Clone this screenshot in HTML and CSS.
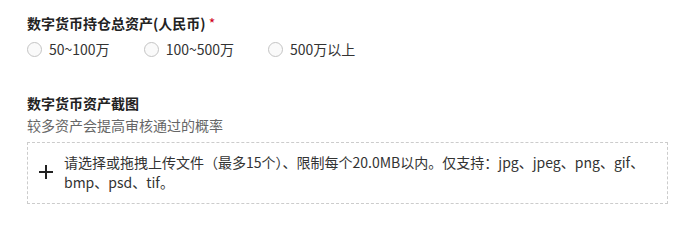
FILE: index.html
```html
<!DOCTYPE html>
<html lang="zh-CN">

<head>
  <meta charset="UTF-8">
  <meta name="viewport" content="width=device-width, initial-scale=1.0">
  <title>资产信息</title>
  <link rel="stylesheet" href="styles.css">
</head>

<body>

  <div class="form-item">
    <div class="label">数字货币持仓总资产(人民币) <span class="required">*</span></div>
    <div class="radio-group">
      <label class="radio"><span class="radio-dot"></span>50~100万</label>
      <label class="radio"><span class="radio-dot"></span>100~500万</label>
      <label class="radio"><span class="radio-dot"></span>500万以上</label>
    </div>
  </div>

  <div class="form-item upload-item">
    <div class="label">数字货币资产截图</div>
    <div class="hint">较多资产会提高审核通过的概率</div>
    <div class="upload-box">
      <span class="plus">
        <svg width="14" height="14" viewBox="0 0 14 14">
          <path d="M7 0v14M0 7h14" stroke="#222" stroke-width="2" fill="none" />
        </svg>
      </span>
      <div class="upload-text">请选择或拖拽上传文件（最多15个）、限制每个20.0MB以内。仅支持：jpg、jpeg、png、gif、bmp、psd、tif。</div>
    </div>
  </div>

</body>

</html>
```

FILE: styles.css
```css
body {
  font-family: "Noto Sans CJK SC", "Noto Sans", sans-serif;
  font-size: 14px;
  line-height: 20px;
  color: #333;
  background-color: #fff;
  margin: 0;
  padding: 13px 21px 0 27px;
}

.label {
  font-weight: bold;
  color: #222;
}

.required {
  color: #d0021b;
  font-weight: normal;
}

.radio-group {
  display: flex;
  margin-top: 6px;
}

.radio {
  display: flex;
  align-items: center;
  margin-right: 34px;
}

.radio-dot {
  width: 13px;
  height: 13px;
  border: 1px solid #c4c4c4;
  border-radius: 50%;
  background-color: #fafafa;
  margin-right: 7px;
}

.upload-item {
  margin-top: 34px;
}

.hint {
  color: #666;
  margin-top: 2px;
}

.upload-box {
  display: flex;
  align-items: center;
  margin-top: 7px;
  border: 1px dashed #ccc;
  padding: 9px 12px 11px 11px;
}

.plus {
  display: flex;
  margin-right: 11px;
}

.upload-text {
  flex: 1;
}
```
